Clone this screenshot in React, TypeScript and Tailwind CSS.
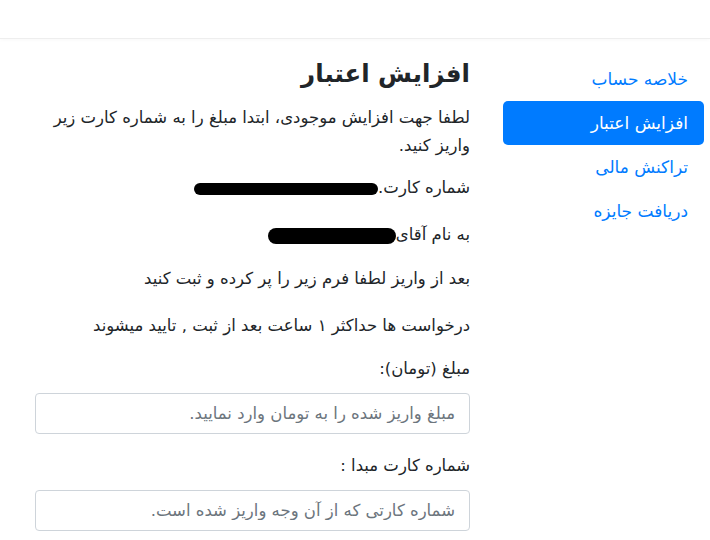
const navItems = ["خلاصه حساب", "افزایش اعتبار", "تراکنش مالی", "دریافت جایزه"];

const Redacted = ({ width, height }: { width: number; height: number }) => (
  <span
    className="inline-block rounded-full bg-black align-middle"
    style={{ width, height }}
  />
);

export default function App() {
  return (
    <div
      dir="rtl"
      className="min-h-screen bg-white text-[#212529]"
      style={{ fontFamily: '"DejaVu Sans", sans-serif' }}
    >
      <header className="h-[39px] border-b border-[#eeeeee] shadow-[0_2px_3px_rgba(0,0,0,0.02)]" />
      <div className="flex gap-[33px] pl-[35px] pr-[6px] pt-[18px]">
        {/* منوی کناری */}
        <nav className="flex w-[201px] shrink-0 flex-col">
          {navItems.map((item, i) => (
            <a
              key={item}
              href="#"
              className={
                i === 1
                  ? "rounded-[5px] bg-[#007bff] px-4 py-2 text-[17px] leading-[28px] text-white"
                  : "rounded-[5px] px-4 py-2 text-[17px] leading-[28px] text-[#007bff]"
              }
            >
              {item}
            </a>
          ))}
        </nav>

        {/* محتوای اصلی */}
        <main className="w-[435px] text-[16.5px] leading-[28px]">
          <h3 className="mb-[13px] text-[24.5px] font-bold leading-[34px]">افزایش اعتبار</h3>
          <p className="mb-[14px]">
            لطفا جهت افزایش موجودی، ابتدا مبلغ را به شماره کارت زیر واریز کنید.
          </p>
          <p className="mb-[19px]">
            شماره کارت.
            <Redacted width={184} height={12} />
          </p>
          <p className="mb-4">
            به نام آقای
            <Redacted width={128} height={16} />
          </p>
          <p className="mb-[19px]">بعد از واریز لطفا فرم زیر را پر کرده و ثبت کنید</p>
          <p className="mb-[15px]">درخواست ها حداکثر ۱ ساعت بعد از ثبت , تایید میشوند</p>

          <div className="mb-[18px]">
            <label className="mb-[10px] block">مبلغ (تومان):</label>
            <input
              type="text"
              placeholder="مبلغ واریز شده را به تومان وارد نمایید."
              className="block h-[41px] w-full rounded-[4px] border border-[#ced4da] px-[14px] text-[16.5px] placeholder:text-[#6c757d]"
            />
          </div>
          <div>
            <label className="mb-[10px] block">شماره کارت مبدا :</label>
            <input
              type="text"
              placeholder="شماره کارتی که از آن وجه واریز شده است."
              className="block h-[41px] w-full rounded-[4px] border border-[#ced4da] px-[14px] text-[16.5px] placeholder:text-[#6c757d]"
            />
          </div>
        </main>
      </div>
    </div>
  );
}
